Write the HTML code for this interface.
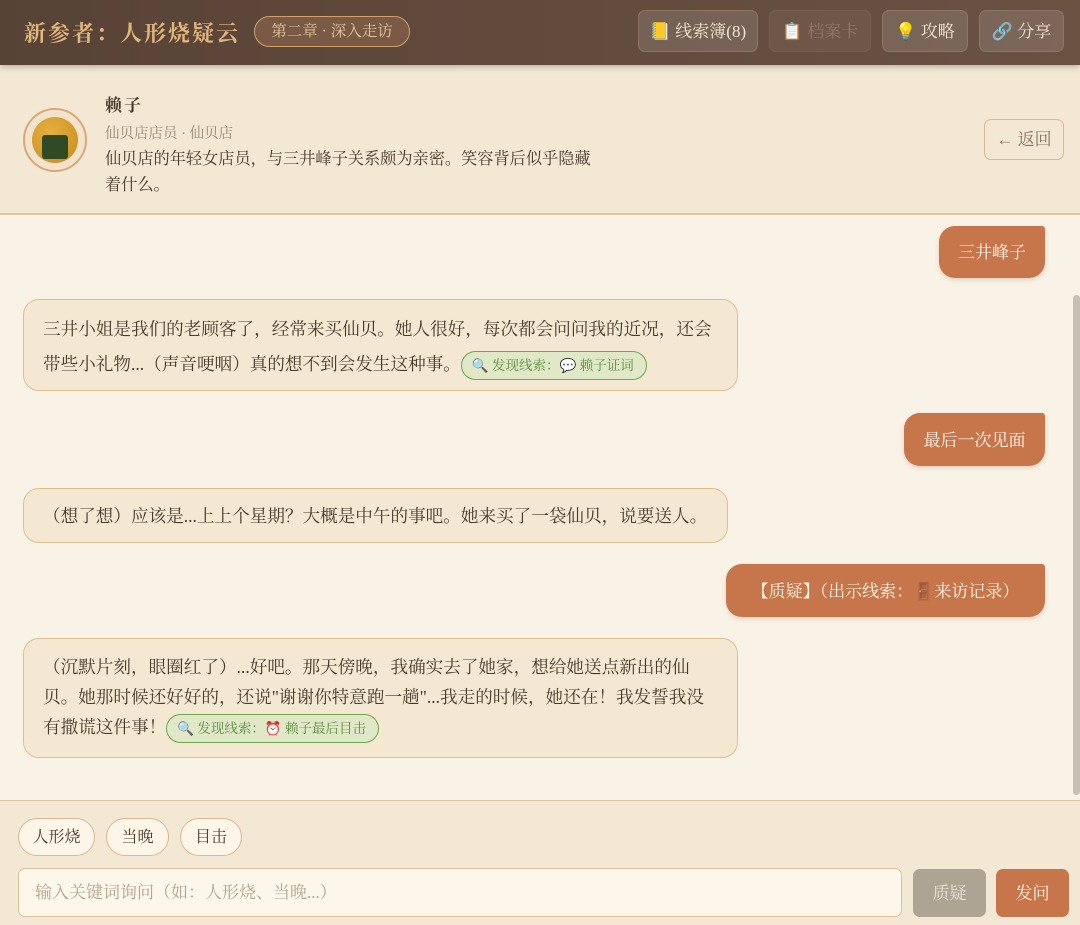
<!DOCTYPE html>
<html><head><meta charset="utf-8"><style>
*{box-sizing:border-box;margin:0;padding:0}
body{width:1080px;height:925px;overflow:hidden;font-family:"Liberation Serif","Noto Serif CJK SC",serif;background:#f9f2e6;position:relative;color:#4a3a2c}
.abs{position:absolute}
.hdr{left:0;top:0;width:1080px;height:65px;background:linear-gradient(90deg,#574336,#6a5243);box-shadow:0 2px 6px rgba(0,0,0,.25);z-index:2}
.title{left:24px;top:17px;font-size:22px;color:#e2b77c;letter-spacing:2px;font-weight:bold;white-space:nowrap}
.badge{left:254px;top:16px;width:156px;height:31px;border:1.5px solid #d4a06a;border-radius:16px;background:#7a5a44;color:#e2c6a2;font-size:15.5px;text-align:center;line-height:30px;white-space:nowrap}
.hb{top:10px;height:42px;border:1px solid #8d7565;border-radius:7px;background:rgba(255,255,255,.12);color:#f3e6d6;font-size:17px;text-align:center;line-height:42px;white-space:nowrap}
.hb.dis{color:#8e7a6c;background:rgba(255,255,255,.05);border-color:#75604f}
.prof{left:0;top:65px;width:1080px;height:150px;background:#f3e8d4;border-bottom:2px solid #e0c4a0}
.av{left:23px;top:108px;width:64px;height:64px;border-radius:50%;border:2px solid #d9a878;background:#f3e3cc}
.av .in{position:absolute;left:7px;top:7px;width:46px;height:46px;border-radius:50%;background:radial-gradient(circle at 40% 35%,#e8b040,#c48a1e)}
.av .nori{position:absolute;left:17px;top:25px;width:26px;height:24px;background:#2f4a24;border-radius:3px}
.back{left:984px;top:119px;width:80px;height:41px;border:1.5px solid #ddb88e;border-radius:7px;color:#8a7260;font-size:17px;text-align:center;line-height:40px}
.bot{left:23px;background:#f4e8d2;border:1.5px solid #dfbf8f;border-radius:16px;font-size:17.6px;color:#4a3a2c;padding:0 19px;line-height:35px;white-space:nowrap}
.usr{right:35px;background:#c6764a;color:#fff5ea;border-radius:16px;border-top-right-radius:3px;font-size:17px;text-align:center;box-shadow:0 2px 4px rgba(150,80,40,.2);white-space:nowrap}
.clue{display:inline-block;border:1.5px solid #6aa84c;background:#e0e8c8;color:#5b8e3c;font-size:13.5px;border-radius:15px;padding:0 12px 0 10px;line-height:27px;vertical-align:middle}
.bottom{left:0;top:800px;width:1080px;height:125px;background:#f3e8d4;border-top:1.5px solid #e0c4a0}
.chip{top:818px;height:38px;border:1.5px solid #e0b68c;border-radius:19px;background:#fcf5e8;font-size:16px;text-align:center;line-height:37px;color:#4a3a2c}
.inp{left:18px;top:868px;width:884px;height:49px;border:1.5px solid #e0c09a;border-radius:7px;background:#fdf7ea;font-size:17px;color:#b2a393;padding-left:16px;line-height:48px}
.btn{top:869px;width:73px;height:48px;border-radius:7px;font-size:17px;text-align:center;line-height:50px;color:#fff3e6}
.sb{left:1073px;top:295px;width:7px;height:500px;background:#c9c0b4;border-radius:4px}
</style></head><body>
<div class="abs hdr">
<div class="abs title">新参者：人形烧疑云</div>
<div class="abs badge">第二章 · 深入走访</div>
<div class="abs hb" style="left:638px;width:120px">📒 线索簿(8)</div>
<div class="abs hb dis" style="left:769px;width:102px">📋 档案卡</div>
<div class="abs hb" style="left:882px;width:86px">💡 攻略</div>
<div class="abs hb" style="left:979px;width:85px">🔗 分享</div>
</div>
<div class="abs prof"></div>
<div class="abs av"><div class="in"></div><div class="nori"></div></div>
<div class="abs" style="left:105px;top:91px;font-size:17px;font-weight:bold;letter-spacing:2px">赖子</div>
<div class="abs" style="left:105px;top:122px;font-size:14.5px;color:#9a8a7a">仙贝店店员 · 仙贝店</div>
<div class="abs" style="left:105px;top:146px;font-size:16.2px;line-height:26px;color:#4a3a2c;white-space:nowrap">仙贝店的年轻女店员，与三井峰子关系颇为亲密。笑容背后似乎隐藏<br>着什么。</div>
<div class="abs back">← 返回</div>

<div class="abs usr" style="top:226px;width:106px;height:52px;line-height:54px">三井峰子</div>
<div class="abs bot" style="top:299px;width:715px;height:92px;padding-top:12px">三井小姐是我们的老顾客了，经常来买仙贝。她人很好，每次都会问问我的近况，还会<br>带些小礼物...（声音哽咽）真的想不到会发生这种事。<span class="clue">🔍 发现线索：💬 赖子证词</span></div>
<div class="abs usr" style="top:413px;width:141px;height:53px;line-height:55px">最后一次见面</div>
<div class="abs bot" style="top:488px;width:705px;height:55px;line-height:54px">（想了想）应该是...上上个星期？大概是中午的事吧。她来买了一袋仙贝，说要送人。</div>
<div class="abs usr" style="top:564px;width:319px;height:53px;line-height:55px">【质疑】（出示线索：🚪来访记录）</div>
<div class="abs bot" style="top:638px;width:715px;height:120px;padding-top:13px;line-height:30px">（沉默片刻，眼圈红了）...好吧。那天傍晚，我确实去了她家，想给她送点新出的仙<br>贝。她那时候还好好的，还说"谢谢你特意跑一趟"...我走的时候，她还在！我发誓我没<br>有撒谎这件事！<span class="clue">🔍 发现线索：⏰ 赖子最后目击</span></div>
<div class="abs sb"></div>

<div class="abs bottom"></div>
<div class="abs chip" style="left:18px;width:77px">人形烧</div>
<div class="abs chip" style="left:106px;width:63px">当晚</div>
<div class="abs chip" style="left:180px;width:62px">目击</div>
<div class="abs inp">输入关键词询问（如：人形烧、当晚...）</div>
<div class="abs btn" style="left:913px;background:#ada493;color:#ece4d8">质疑</div>
<div class="abs btn" style="left:996px;background:#c6764a">发问</div>
</body></html>
